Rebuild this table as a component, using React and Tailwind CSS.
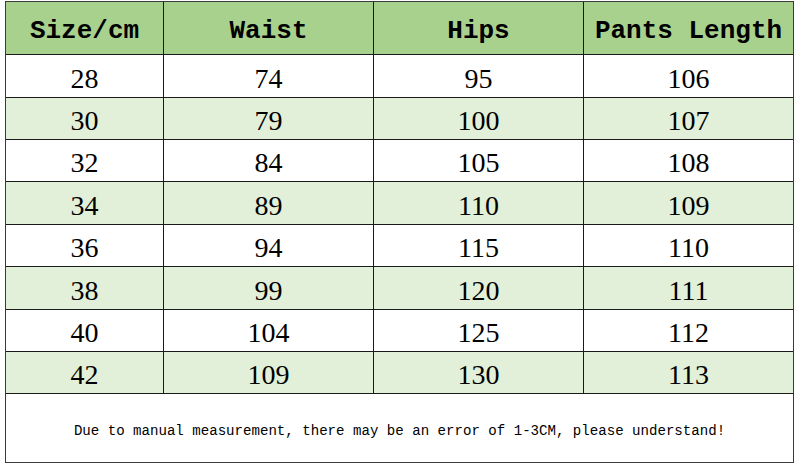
const headers = ["Size/cm", "Waist", "Hips", "Pants Length"];

const rows = [
  ["28", "74", "95", "106"],
  ["30", "79", "100", "107"],
  ["32", "84", "105", "108"],
  ["34", "89", "110", "109"],
  ["36", "94", "115", "110"],
  ["38", "99", "120", "111"],
  ["40", "104", "125", "112"],
  ["42", "109", "130", "113"],
];

// row heights picked so the lines land where the sheet has them
const rowHeights = ["h-[42px]", "h-[41px]", "h-[41px]", "h-[42px]", "h-[41px]", "h-[42px]", "h-[41px]", "h-[41px]"];

export default function App() {
  return (
    <div className="h-[466px] w-[800px] overflow-hidden bg-white pl-[5px] pt-px">
      <div className="w-[789px] border border-[#3a3a3a] bg-[#1a1a1a]">
        <div className="grid grid-cols-[157px_209px_209px_209px] gap-px">
          {headers.map((h) => (
            <div
              key={h}
              className="flex h-[52px] items-center justify-center bg-[#a9d18e] pt-[7px] text-[26px] font-bold text-black"
              style={{ fontFamily: '"Liberation Mono", "DejaVu Sans Mono", monospace' }}
            >
              {h}
            </div>
          ))}
          {rows.map((row, i) =>
            row.map((cell, j) => (
              <div
                key={`${i}-${j}`}
                className={`flex items-center justify-center pt-[5px] text-[28px] leading-none text-black ${rowHeights[i]} ${
                  i % 2 === 1 ? "bg-[#e2f0d9]" : "bg-white"
                }`}
                style={{ fontFamily: '"Liberation Serif", "Times New Roman", serif' }}
              >
                {cell}
              </div>
            ))
          )}
        </div>
        <div
          className="mt-px flex h-[68px] items-center justify-center bg-white pt-[7px] text-[14.1px] text-black"
          style={{ fontFamily: '"Liberation Mono", "DejaVu Sans Mono", monospace' }}
        >
          Due to manual measurement, there may be an error of 1-3CM, please understand!
        </div>
      </div>
    </div>
  );
}
